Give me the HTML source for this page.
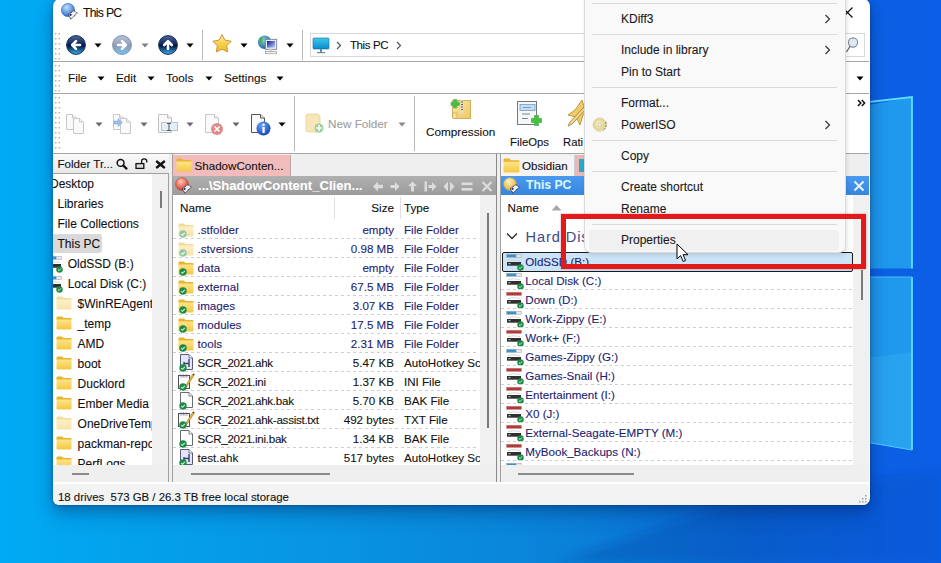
<!DOCTYPE html>
<html><head><meta charset="utf-8"><style>
*{margin:0;padding:0;box-sizing:border-box}
html,body{width:941px;height:563px;overflow:hidden}
body{position:relative;font-family:"Liberation Sans",sans-serif;font-size:12px;color:#000;background:#0a8ee4}
.a{position:absolute}
.t{position:absolute;white-space:nowrap;line-height:1;-webkit-text-stroke:0.1px currentColor}
</style></head><body>
<svg width="0" height="0" style="position:absolute"><defs>
<linearGradient id="fg" x1="0" y1="0" x2="0" y2="1"><stop offset="0" stop-color="#ffe48a"/><stop offset="1" stop-color="#f5c842"/></linearGradient>
<linearGradient id="fgl" x1="0" y1="0" x2="0" y2="1"><stop offset="0" stop-color="#fdf0c8"/><stop offset="1" stop-color="#f8e2a8"/></linearGradient>
<symbol id="folder" viewBox="0 0 16 14"><path d="M0.5 1.5Q0.5 0.5 1.5 0.5H6L7.5 2H14.5Q15.5 2 15.5 3V4H0.5Z" fill="#e9b531"/><path d="M0.5 3.5H15.5V12.5Q15.5 13.5 14.5 13.5H1.5Q0.5 13.5 0.5 12.5Z" fill="url(#fg)"/></symbol>
<symbol id="folderl" viewBox="0 0 16 14"><path d="M0.5 1.5Q0.5 0.5 1.5 0.5H6L7.5 2H14.5Q15.5 2 15.5 3V4H0.5Z" fill="#f3dc9a"/><path d="M0.5 3.5H15.5V12.5Q15.5 13.5 14.5 13.5H1.5Q0.5 13.5 0.5 12.5Z" fill="url(#fgl)"/></symbol>
<symbol id="chk" viewBox="0 0 8 8"><circle cx="4" cy="4" r="3.7" fill="#1f8a48"/><path d="M2.2 4.1L3.5 5.3L5.8 2.8" stroke="#c8f8d0" stroke-width="1.1" fill="none"/></symbol>
<symbol id="chkl" viewBox="0 0 8 8"><circle cx="4" cy="4" r="3.7" fill="#90c8a4"/><path d="M2.2 4.1L3.5 5.3L5.8 2.8" stroke="#fff" stroke-width="1.1" fill="none"/></symbol>
<symbol id="doc" viewBox="0 0 14 17"><path d="M1.5 0.5H9L12.5 4V16.5H1.5Z" fill="#fff" stroke="#7a7a7a"/><path d="M9 0.5V4H12.5" fill="#eee" stroke="#7a7a7a"/></symbol>
<symbol id="drive" viewBox="0 0 16 16"><rect x="0.5" y="1.2" width="15" height="3.3" fill="#e4e8ec" stroke="#9aa0a8" stroke-width=".5"/><rect x="0.8" y="1.5" width="9.5" height="2.7" fill="#3f8fc8"/><path d="M2 7.5Q8 6 14 7.5" stroke="#d8d8d8" stroke-width="1" fill="none"/><rect x="1" y="9" width="14" height="3.7" fill="#303030"/><rect x="2.5" y="10.2" width="2" height="1" fill="#a0f0b0"/></symbol>
<symbol id="driver" viewBox="0 0 16 16"><rect x="0.5" y="1.2" width="15" height="3.3" fill="#b03a3a" stroke="#c89090" stroke-width=".5"/><path d="M2 7.5Q8 6 14 7.5" stroke="#d8d8d8" stroke-width="1" fill="none"/><rect x="1" y="9" width="14" height="3.7" fill="#303030"/><rect x="2.5" y="10.2" width="2" height="1" fill="#a0f0b0"/></symbol>
</defs></svg>
<svg class="a" style="left:0;top:0" width="941" height="563"><defs><linearGradient id="wb" x1="0" y1="0" x2="941" y2="0" gradientUnits="userSpaceOnUse"><stop offset="0" stop-color="#00aaf4"/><stop offset="0.06" stop-color="#02a6f0"/><stop offset="0.35" stop-color="#0894e2"/><stop offset="0.6" stop-color="#0a82d8"/><stop offset="0.8" stop-color="#0a66d8"/><stop offset="0.93" stop-color="#0b60e4"/><stop offset="1" stop-color="#0b5ee6"/></linearGradient><linearGradient id="wt" x1="0" y1="0" x2="0" y2="563" gradientUnits="userSpaceOnUse"><stop offset="0" stop-color="#0a5ad0" stop-opacity=".25"/><stop offset=".4" stop-color="#0a5ad0" stop-opacity="0"/></linearGradient><linearGradient id="wd" x1="560" y1="0" x2="941" y2="0" gradientUnits="userSpaceOnUse"><stop offset="0" stop-color="#002c80" stop-opacity=".22"/><stop offset="1" stop-color="#002c80" stop-opacity=".12"/></linearGradient><linearGradient id="pg1" x1="0" y1="0" x2="1" y2="0"><stop offset="0" stop-color="#1890ea"/><stop offset="1" stop-color="#209aec"/></linearGradient><filter id="bl" x="-20%" y="-50%" width="140%" height="200%"><feGaussianBlur stdDeviation="5"/></filter></defs><rect width="941" height="563" fill="url(#wb)"/><path d="M555 563 L725 505 L870 480 L941 470 L941 563Z" fill="url(#wd)" filter="url(#bl)"/><path d="M760 125 L912 97 L912 268.5 L760 268.5Z" fill="url(#pg1)"/><path d="M760 277 L912 277 L912 450 L760 425Z" fill="url(#pg1)"/><path d="M760 372 L912 352 L912 450 L760 425Z" fill="#50c8ff" fill-opacity=".2"/><path d="M860 103 L912 97 L912 268.5" stroke="#60dcff" stroke-width="1.8" fill="none"/><path d="M912 277 L912 450" stroke="#60dcff" stroke-width="1.8" fill="none"/><path d="M860 277 L912 277" stroke="#4ac0ff" stroke-width="1" fill="none"/><path d="M860 441 L912 450" stroke="#50c8ff" stroke-width="1.2" fill="none"/></svg>
<div class="a" style="left:53px;top:-1px;width:817px;height:506px;background:#fff;border-radius:7px;box-shadow:0 0 3px rgba(0,0,0,.3),0 4px 12px rgba(0,30,90,.3),0 12px 20px rgba(0,30,90,.2)"></div>
<svg class="a" style="left:59.7px;top:2.4000000000000004px;" width="20" height="20" viewBox="0 0 20 20"><defs><radialGradient id="gl" cx=".4" cy=".3" r=".8"><stop offset="0" stop-color="#bfe0ff"/><stop offset="1" stop-color="#1a5cc0"/></radialGradient></defs><circle cx="8" cy="8" r="6.6" fill="url(#gl)" stroke="#1a5cc0" stroke-width=".6"/><polygon points="8.3,12.6 13.9,8.6 17.3,11.1 10.9,17.2" fill="#eeeefa" stroke="#222" stroke-width="1" stroke-dasharray="1.2 .6"/><circle cx="10.6" cy="12.8" r="1.1" fill="#2a2a7a"/></svg>
<div class="t" style="left:83px;top:7.40px;font-size:12.2px;color:#111;letter-spacing:-0.7px">This PC</div>
<svg class="a" style="left:841.5px;top:6.5px;" width="12" height="11" viewBox="0 0 12 11"><path d="M0.5 0.5L10.5 10.5M10.5 0.5L0.5 10.5" stroke="#111" stroke-width="1.2"/></svg>
<svg class="a" style="left:55px;top:33px;" width="6" height="27" viewBox="0 0 6 27"><rect x="0" y="0" width="1.5" height="1.5" fill="#b4b4b4"/><rect x="3.5" y="0" width="1.5" height="1.5" fill="#b4b4b4"/><rect x="0" y="5" width="1.5" height="1.5" fill="#b4b4b4"/><rect x="3.5" y="5" width="1.5" height="1.5" fill="#b4b4b4"/><rect x="0" y="10" width="1.5" height="1.5" fill="#b4b4b4"/><rect x="3.5" y="10" width="1.5" height="1.5" fill="#b4b4b4"/><rect x="0" y="15" width="1.5" height="1.5" fill="#b4b4b4"/><rect x="3.5" y="15" width="1.5" height="1.5" fill="#b4b4b4"/><rect x="0" y="20" width="1.5" height="1.5" fill="#b4b4b4"/><rect x="3.5" y="20" width="1.5" height="1.5" fill="#b4b4b4"/><rect x="0" y="25" width="1.5" height="1.5" fill="#b4b4b4"/><rect x="3.5" y="25" width="1.5" height="1.5" fill="#b4b4b4"/></svg>
<svg class="a" style="left:55px;top:65px;" width="6" height="27" viewBox="0 0 6 27"><rect x="0" y="0" width="1.5" height="1.5" fill="#b4b4b4"/><rect x="3.5" y="0" width="1.5" height="1.5" fill="#b4b4b4"/><rect x="0" y="5" width="1.5" height="1.5" fill="#b4b4b4"/><rect x="3.5" y="5" width="1.5" height="1.5" fill="#b4b4b4"/><rect x="0" y="10" width="1.5" height="1.5" fill="#b4b4b4"/><rect x="3.5" y="10" width="1.5" height="1.5" fill="#b4b4b4"/><rect x="0" y="15" width="1.5" height="1.5" fill="#b4b4b4"/><rect x="3.5" y="15" width="1.5" height="1.5" fill="#b4b4b4"/><rect x="0" y="20" width="1.5" height="1.5" fill="#b4b4b4"/><rect x="3.5" y="20" width="1.5" height="1.5" fill="#b4b4b4"/><rect x="0" y="25" width="1.5" height="1.5" fill="#b4b4b4"/><rect x="3.5" y="25" width="1.5" height="1.5" fill="#b4b4b4"/></svg>
<svg class="a" style="left:55px;top:97px;" width="6" height="54" viewBox="0 0 6 54"><rect x="0" y="0" width="1.5" height="1.5" fill="#b4b4b4"/><rect x="3.5" y="0" width="1.5" height="1.5" fill="#b4b4b4"/><rect x="0" y="5" width="1.5" height="1.5" fill="#b4b4b4"/><rect x="3.5" y="5" width="1.5" height="1.5" fill="#b4b4b4"/><rect x="0" y="10" width="1.5" height="1.5" fill="#b4b4b4"/><rect x="3.5" y="10" width="1.5" height="1.5" fill="#b4b4b4"/><rect x="0" y="15" width="1.5" height="1.5" fill="#b4b4b4"/><rect x="3.5" y="15" width="1.5" height="1.5" fill="#b4b4b4"/><rect x="0" y="20" width="1.5" height="1.5" fill="#b4b4b4"/><rect x="3.5" y="20" width="1.5" height="1.5" fill="#b4b4b4"/><rect x="0" y="25" width="1.5" height="1.5" fill="#b4b4b4"/><rect x="3.5" y="25" width="1.5" height="1.5" fill="#b4b4b4"/><rect x="0" y="30" width="1.5" height="1.5" fill="#b4b4b4"/><rect x="3.5" y="30" width="1.5" height="1.5" fill="#b4b4b4"/><rect x="0" y="35" width="1.5" height="1.5" fill="#b4b4b4"/><rect x="3.5" y="35" width="1.5" height="1.5" fill="#b4b4b4"/><rect x="0" y="40" width="1.5" height="1.5" fill="#b4b4b4"/><rect x="3.5" y="40" width="1.5" height="1.5" fill="#b4b4b4"/><rect x="0" y="45" width="1.5" height="1.5" fill="#b4b4b4"/><rect x="3.5" y="45" width="1.5" height="1.5" fill="#b4b4b4"/><rect x="0" y="50" width="1.5" height="1.5" fill="#b4b4b4"/><rect x="3.5" y="50" width="1.5" height="1.5" fill="#b4b4b4"/></svg>
<svg class="a" style="left:64.5px;top:33.5px;" width="22" height="22" viewBox="0 0 22 22"><defs><linearGradient id="n75" x1="0" y1="0" x2="0" y2="1"><stop offset="0" stop-color="#4a6aa0"/><stop offset=".55" stop-color="#04164a"/><stop offset="1" stop-color="#38b8f0"/></linearGradient></defs><circle cx="11" cy="11" r="9.4" fill="url(#n75)" stroke="#1a2a4a" stroke-width="1"/><path d="M15 11H7.5M11 7.2L7.2 11L11 14.8" stroke="#fff" stroke-width="2.6" stroke-linecap="round" stroke-linejoin="round" fill="none"/></svg>
<svg class="a" style="left:110.5px;top:33.5px;" width="22" height="22" viewBox="0 0 22 22"><defs><linearGradient id="n121" x1="0" y1="0" x2="0" y2="1"><stop offset="0" stop-color="#b8c4d8"/><stop offset=".55" stop-color="#8a9ab8"/><stop offset="1" stop-color="#78c8f0"/></linearGradient></defs><circle cx="11" cy="11" r="9.4" fill="url(#n121)" stroke="#8090a8" stroke-width="1"/><path d="M7 11H14.5M11 7.2L14.8 11L11 14.8" stroke="#fff" stroke-width="2.6" stroke-linecap="round" stroke-linejoin="round" fill="none"/></svg>
<svg class="a" style="left:156.5px;top:33.5px;" width="22" height="22" viewBox="0 0 22 22"><defs><linearGradient id="n167" x1="0" y1="0" x2="0" y2="1"><stop offset="0" stop-color="#4a6aa0"/><stop offset=".55" stop-color="#04164a"/><stop offset="1" stop-color="#38b8f0"/></linearGradient></defs><circle cx="11" cy="11" r="9.4" fill="url(#n167)" stroke="#1a2a4a" stroke-width="1"/><path d="M11 15V7.5M7.2 11L11 7.2L14.8 11" stroke="#fff" stroke-width="2.6" stroke-linecap="round" stroke-linejoin="round" fill="none"/></svg>
<svg class="a" style="left:94.0px;top:43px;" width="8" height="5" viewBox="0 0 8 5"><path d="M0.5 0.5H7.5L4.0 4.5Z" fill="#000"/></svg>
<svg class="a" style="left:140.5px;top:43px;" width="8" height="5" viewBox="0 0 8 5"><path d="M0.5 0.5H7.5L4.0 4.5Z" fill="#808080"/></svg>
<svg class="a" style="left:186.0px;top:43px;" width="8" height="5" viewBox="0 0 8 5"><path d="M0.5 0.5H7.5L4.0 4.5Z" fill="#000"/></svg>
<div class="a" style="left:202px;top:30px;width:1px;height:30px;background:#b8b8b8;"></div>
<svg class="a" style="left:211px;top:33px;" width="22" height="22" viewBox="0 0 22 22"><defs><linearGradient id="st" x1="0" y1="0" x2="0" y2="1"><stop offset="0" stop-color="#fff2b0"/><stop offset=".5" stop-color="#f8d050"/><stop offset="1" stop-color="#f0b828"/></linearGradient></defs><polygon points="11.00,1.60 13.94,7.15 20.13,8.23 15.76,12.75 16.64,18.97 11.00,16.20 5.36,18.97 6.24,12.75 1.87,8.23 8.06,7.15" fill="url(#st)" stroke="#c89838" stroke-width="1" stroke-linejoin="round"/></svg>
<svg class="a" style="left:240.0px;top:43px;" width="8" height="5" viewBox="0 0 8 5"><path d="M0.5 0.5H7.5L4.0 4.5Z" fill="#000"/></svg>
<svg class="a" style="left:256px;top:33px;" width="24" height="24" viewBox="0 0 24 24"><defs><radialGradient id="gb" cx=".4" cy=".35" r=".7"><stop offset="0" stop-color="#8ad0e8"/><stop offset="1" stop-color="#1a5a90"/></radialGradient><linearGradient id="scr" x1="0" y1="0" x2="1" y2="1"><stop offset="0" stop-color="#0a1a9a"/><stop offset="1" stop-color="#c0d0ff"/></linearGradient></defs><circle cx="8.7" cy="9.2" r="6.8" fill="url(#gb)"/><path d="M4 5Q6 4 7 6Q5 9 6 12Q4 11 3 9Z M9 13Q11 11 10 9" fill="#48b060" stroke="#48b060" stroke-width=".6"/><rect x="9.3" y="6.3" width="11.4" height="10" fill="#e8ecf4" stroke="#707888" stroke-width=".8"/><rect x="11" y="8" width="8" height="6.6" fill="url(#scr)"/><rect x="13.5" y="16.3" width="3" height="2.5" fill="#d8d8d8"/><rect x="9.5" y="18.6" width="11" height="2.2" fill="#f0f0f0" stroke="#8a8a8a" stroke-width=".6"/></svg>
<svg class="a" style="left:286.0px;top:43px;" width="8" height="5" viewBox="0 0 8 5"><path d="M0.5 0.5H7.5L4.0 4.5Z" fill="#000"/></svg>
<div class="a" style="left:302px;top:30px;width:1px;height:30px;background:#b8b8b8;"></div>
<div class="a" style="left:310px;top:33px;width:555px;height:24px;background:#fff;border:1px solid #d9d9d9"></div>
<svg class="a" style="left:312px;top:37px;" width="18" height="17" viewBox="0 0 18 17"><defs><linearGradient id="mo" x1="0" y1="0" x2="0" y2="1"><stop offset="0" stop-color="#3ec8f0"/><stop offset="1" stop-color="#0a8ac8"/></linearGradient></defs><rect x="1" y="1" width="16" height="11" rx="1" fill="url(#mo)" stroke="#1a6a9a" stroke-width=".6"/><rect x="8" y="12" width="2" height="3" fill="#6a8a9a"/><rect x="5" y="15" width="8" height="1.2" fill="#6a8a9a"/></svg>
<svg class="a" style="left:336px;top:41px;" width="6" height="9" viewBox="0 0 6 9"><path d="M1 1L4.5 4.5L1 8" stroke="#555" stroke-width="1.2" fill="none"/></svg>
<div class="t" style="left:350px;top:39.75px;font-size:11.5px;color:#111;letter-spacing:-0.4px">This PC</div>
<svg class="a" style="left:396px;top:41px;" width="6" height="9" viewBox="0 0 6 9"><path d="M1 1L4.5 4.5L1 8" stroke="#555" stroke-width="1.2" fill="none"/></svg>
<svg class="a" style="left:845px;top:36px;" width="18" height="18" viewBox="0 0 18 18"><circle cx="8" cy="6.5" r="4.6" fill="#dceaf8" stroke="#868a90" stroke-width="1.1"/><path d="M5.2 10L1.5 16" stroke="#6a6a6a" stroke-width="1.3"/></svg>
<div class="a" style="left:53px;top:61px;width:816px;height:1px;background:#a6a6a6;"></div>
<div class="a" style="left:53px;top:93px;width:816px;height:1px;background:#a6a6a6;"></div>
<div class="a" style="left:53px;top:153px;width:816px;height:1px;background:#a6a6a6;"></div>
<div class="t" style="left:68px;top:72.15px;font-size:11.7px;color:#111;">File</div>
<svg class="a" style="left:97.0px;top:76px;" width="8" height="5" viewBox="0 0 8 5"><path d="M0.5 0.5H7.5L4.0 4.5Z" fill="#000"/></svg>
<div class="t" style="left:116px;top:72.15px;font-size:11.7px;color:#111;">Edit</div>
<svg class="a" style="left:147.0px;top:76px;" width="8" height="5" viewBox="0 0 8 5"><path d="M0.5 0.5H7.5L4.0 4.5Z" fill="#000"/></svg>
<div class="t" style="left:166px;top:72.15px;font-size:11.7px;color:#111;">Tools</div>
<svg class="a" style="left:205.0px;top:76px;" width="8" height="5" viewBox="0 0 8 5"><path d="M0.5 0.5H7.5L4.0 4.5Z" fill="#000"/></svg>
<div class="t" style="left:224px;top:72.15px;font-size:11.7px;color:#111;">Settings</div>
<svg class="a" style="left:276.0px;top:76px;" width="8" height="5" viewBox="0 0 8 5"><path d="M0.5 0.5H7.5L4.0 4.5Z" fill="#000"/></svg>
<svg class="a" style="left:855.5px;top:76px;" width="8" height="5" viewBox="0 0 8 5"><path d="M0.5 0.5H7.5L4.0 4.5Z" fill="#000"/></svg>
<svg class="a" style="left:66px;top:113.5px;" width="12" height="17" viewBox="0 0 12 17"><path d="M0.5 0.5H6.5L10.5 4V15.5H0.5Z" fill="#fafafa" stroke="#c8c8c8"/><path d="M6.5 0.5V4H10.5" fill="#eee" stroke="#c8c8c8"/></svg>
<svg class="a" style="left:73px;top:117.5px;" width="12" height="17" viewBox="0 0 12 17"><path d="M0.5 0.5H6.5L10.5 4V15.5H0.5Z" fill="#fafafa" stroke="#c8c8c8"/><path d="M6.5 0.5V4H10.5" fill="#eee" stroke="#c8c8c8"/></svg>
<svg class="a" style="left:94.5px;top:122px;" width="8" height="5" viewBox="0 0 8 5"><path d="M0.5 0.5H7.5L4.0 4.5Z" fill="#6a6a6a"/></svg>
<svg class="a" style="left:113px;top:113.5px;" width="12" height="17" viewBox="0 0 12 17"><path d="M0.5 0.5H6.5L10.5 4V15.5H0.5Z" fill="#fafafa" stroke="#c8c8c8"/><path d="M6.5 0.5V4H10.5" fill="#eee" stroke="#c8c8c8"/></svg>
<svg class="a" style="left:119.5px;top:117.5px;" width="12" height="17" viewBox="0 0 12 17"><path d="M0.5 0.5H6.5L10.5 4V15.5H0.5Z" fill="#fafafa" stroke="#c8c8c8"/><path d="M6.5 0.5V4H10.5" fill="#eee" stroke="#c8c8c8"/></svg>
<svg class="a" style="left:113px;top:118px;" width="10" height="9" viewBox="0 0 10 9"><path d="M1 3H5V0.5L9.5 4.5L5 8.5V6H1Z" fill="#9cc0e8" stroke="#7aa0d0" stroke-width=".5"/></svg>
<svg class="a" style="left:140.0px;top:122px;" width="8" height="5" viewBox="0 0 8 5"><path d="M0.5 0.5H7.5L4.0 4.5Z" fill="#6a6a6a"/></svg>
<svg class="a" style="left:158px;top:113.5px;" width="15" height="20" viewBox="0 0 15 20"><path d="M0.5 0.5H9.5L13.5 4V18.5H0.5Z" fill="#fafafa" stroke="#c0c0c0"/><path d="M9.5 0.5V4H13.5" fill="#eee" stroke="#c0c0c0"/></svg>
<div class="a" style="left:161px;top:121.5px;width:17px;height:9px;background:#e4eef8;border:1px solid #b4c4d4"></div>
<svg class="a" style="left:164px;top:122.5px;" width="10" height="8" viewBox="0 0 10 8"><path d="M3 0.5H7M5 0.5V7.5M3 7.5H7" stroke="#555" stroke-width="1"/></svg>
<svg class="a" style="left:186.0px;top:122px;" width="8" height="5" viewBox="0 0 8 5"><path d="M0.5 0.5H7.5L4.0 4.5Z" fill="#6a6a6a"/></svg>
<svg class="a" style="left:205px;top:113.5px;" width="15" height="20" viewBox="0 0 15 20"><path d="M0.5 0.5H9.5L13.5 4V18.5H0.5Z" fill="#fafafa" stroke="#c8c8c8"/><path d="M9.5 0.5V4H13.5" fill="#eee" stroke="#c8c8c8"/></svg>
<svg class="a" style="left:210px;top:122px;" width="14" height="14" viewBox="0 0 14 14"><circle cx="7" cy="7" r="6" fill="#e08a8a"/><path d="M4.5 4.5L9.5 9.5M9.5 4.5L4.5 9.5" stroke="#fff" stroke-width="1.6"/></svg>
<svg class="a" style="left:232.0px;top:122px;" width="8" height="5" viewBox="0 0 8 5"><path d="M0.5 0.5H7.5L4.0 4.5Z" fill="#6a6a6a"/></svg>
<svg class="a" style="left:251px;top:113.5px;" width="15" height="20" viewBox="0 0 15 20"><path d="M0.5 0.5H9.5L13.5 4V18.5H0.5Z" fill="#fafafa" stroke="#555"/><path d="M9.5 0.5V4H13.5" fill="#eee" stroke="#555"/></svg>
<svg class="a" style="left:256px;top:121px;" width="15" height="15" viewBox="0 0 15 15"><defs><radialGradient id="ig" cx=".4" cy=".3" r=".8"><stop offset="0" stop-color="#6aa8ff"/><stop offset="1" stop-color="#0a3aa8"/></radialGradient></defs><circle cx="7.5" cy="7.5" r="7" fill="url(#ig)"/><rect x="6.5" y="6" width="2.2" height="6" fill="#fff"/><circle cx="7.6" cy="3.8" r="1.2" fill="#fff"/></svg>
<svg class="a" style="left:278.0px;top:122px;" width="8" height="5" viewBox="0 0 8 5"><path d="M0.5 0.5H7.5L4.0 4.5Z" fill="#000"/></svg>
<div class="a" style="left:294px;top:96px;width:1px;height:55px;background:#b8b8b8;"></div>
<svg class="a" style="left:304px;top:113px;" width="20" height="21" viewBox="0 0 20 21"><path d="M2 3Q2 1 4 1H14L16 3V17Q16 19 14 19H4Q2 19 2 17Z" fill="#f6e6b8" stroke="#e8d090" stroke-width=".8"/><circle cx="15" cy="15" r="4.5" fill="#9ad09a"/><path d="M15 12V18M12 15H18" stroke="#fff" stroke-width="1.6"/></svg>
<div class="t" style="left:328px;top:118.15px;font-size:11.7px;color:#a0a0a0;">New Folder</div>
<svg class="a" style="left:398.0px;top:122px;" width="8" height="5" viewBox="0 0 8 5"><path d="M0.5 0.5H7.5L4.0 4.5Z" fill="#8a8a8a"/></svg>
<div class="a" style="left:414px;top:96px;width:1px;height:55px;background:#b8b8b8;"></div>
<svg class="a" style="left:440px;top:95px;" width="40" height="30" viewBox="0 0 40 30"><defs><linearGradient id="cb" x1="0" y1="0" x2="1" y2="1"><stop offset="0" stop-color="#fbe9a8"/><stop offset="1" stop-color="#eec660"/></linearGradient></defs><path d="M12.5 5.5H30.5V23.5H14Q12.5 23.5 12.5 22Z" fill="url(#cb)" stroke="#c8a048" stroke-width=".8"/><path d="M12.5 18V22Q12.5 23.5 14 23.5H17V18Z" fill="#f4e0a0" stroke="#c8a048" stroke-width=".6"/><rect x="20.5" y="5.5" width="3" height="13" fill="#e6ddc0"/><path d="M21 7H23M21 9.5H23M21 12H23M21 14.5H23" stroke="#555" stroke-width=".9"/><path d="M13.6 4.800000000000001H16.8V7.200000000000001H19.2V10.4H16.8V12.8H13.6V10.4H11.2V7.200000000000001H13.6Z" fill="#44c040" stroke="#1a8a1a" stroke-width=".8"/><path d="M13.6 4.800000000000001H16.8V7.200000000000001H19.2V10.4H16.8V12.8H13.6V10.4H11.2V7.200000000000001H13.6Z" fill="none" stroke="#a8f0a0" stroke-width=".4" transform="translate(0 0)"/></svg>
<div class="t" style="left:426px;top:125.62px;font-size:11.75px;color:#111;">Compression</div>
<svg class="a" style="left:510px;top:95px;" width="35" height="35" viewBox="0 0 35 35"><rect x="7.5" y="6.5" width="19" height="23" fill="#f4f6f8" stroke="#707880"/><rect x="10" y="9.5" width="15" height="6" fill="#c4dcf4" stroke="#6a90b8" stroke-width=".7"/><path d="M13 12.5H21" stroke="#6a90b8" stroke-width=".8"/><path d="M12 19H20M12 23.5H18" stroke="#707880" stroke-width=".9"/><path d="M24.5 20.5H28.5V23.5H31.5V27.5H28.5V30.5H24.5V27.5H21.5V23.5H24.5Z" fill="#44c040" stroke="#1a8a1a" stroke-width=".8"/><path d="M24.5 20.5H28.5V23.5H31.5V27.5H28.5V30.5H24.5V27.5H21.5V23.5H24.5Z" fill="none" stroke="#a8f0a0" stroke-width=".4" transform="translate(0 0)"/></svg>
<div class="t" style="left:510px;top:137.35px;font-size:11.3px;color:#111;">FileOps</div>
<svg class="a" style="left:562px;top:95px;" width="24" height="35" viewBox="0 0 24 35"><path d="M20 5L22.5 13L28 15L21 20L18 30L14 22L6 20L13 15Z" fill="#f0cc68" stroke="#b08828" stroke-width=".8"/><path d="M24 10L8 27L6 31L10 29L26 12Z" fill="#f4d890" stroke="#906818" stroke-width=".7"/></svg>
<div class="t" style="left:563px;top:137.35px;font-size:11.3px;color:#111;">Rati</div>
<svg class="a" style="left:856.5px;top:98.5px;" width="9" height="8" viewBox="0 0 9 8"><path d="M1 1L3.8 4L1 7M4.8 1L7.6 4L4.8 7" stroke="#111" stroke-width="1.5" fill="none"/></svg>
<div class="a" style="left:53px;top:154px;width:816px;height:328px;background:#efefef;"></div>
<div class="a" style="left:53px;top:154px;width:116px;height:19px;background:linear-gradient(#fafafa,#e8e8e8)"></div>
<div class="t" style="left:57.5px;top:157.70px;font-size:11.6px;color:#111;">Folder Tr...</div>
<svg class="a" style="left:115px;top:157px;" width="13" height="13" viewBox="0 0 13 13"><circle cx="5.6" cy="5.9" r="3.4" fill="#f4f4f4" stroke="#111" stroke-width="1.5"/><path d="M8.2 8.4L11.5 11.6" stroke="#111" stroke-width="2.2" stroke-linecap="round"/></svg>
<svg class="a" style="left:134px;top:157px;" width="14" height="13" viewBox="0 0 14 13"><rect x="2" y="6.6" width="7.8" height="4.8" fill="#dcdcdc" stroke="#111" stroke-width="1.3"/><path d="M7.6 6.6V4.6Q7.6 1.8 10.2 1.8Q12.8 1.8 12.8 4.6V5.6" fill="none" stroke="#111" stroke-width="1.3"/></svg>
<svg class="a" style="left:154.5px;top:159.5px;" width="11" height="9" viewBox="0 0 11 9"><path d="M1.2 1L9.8 8M9.8 1L1.2 8" stroke="#111" stroke-width="2.3"/></svg>
<div class="a" style="left:53px;top:173px;width:116px;height:1px;background:#a0a0a0;"></div>
<div class="a" style="left:53px;top:174px;width:99px;height:291px;background:#fff;"></div>
<div class="a" style="left:152px;top:174px;width:16px;height:291px;background:#f0f0f0;"></div>
<div class="a" style="left:159.5px;top:191px;width:2px;height:17px;background:#7a7a7a;"></div>
<div class="a" style="left:168px;top:173px;width:1px;height:309px;background:#a0a0a0;"></div>
<div class="a" style="left:172px;top:154px;width:1px;height:328px;background:#a0a0a0;"></div>
<div class="a" style="left:72px;top:473px;width:17px;height:2px;background:#8a8a8a;"></div>
<div class="a" style="left:53px;top:174px;width:99px;height:291px;overflow:hidden">
<div class="t" style="left:-3px;top:3.70px;font-size:12px;color:#111">Desktop</div>
<div class="t" style="left:4.5px;top:23.70px;font-size:12px;color:#111">Libraries</div>
<div class="t" style="left:4.5px;top:43.70px;font-size:12px;color:#111">File Collections</div>
<div class="a" style="left:0;top:59.5px;width:48.6px;height:19px;background:#d9d9d9;border-radius:0 3px 3px 0"></div>
<div class="t" style="left:4.5px;top:63.70px;font-size:12px;color:#111">This PC</div>
<svg class="a" style="left:-7px;top:81px" width="16" height="16"><use href="#drive"/></svg>
<svg class="a" style="left:2.7px;top:91.5px" width="7" height="7"><use href="#chk"/></svg>
<div class="t" style="left:14.7px;top:83.70px;font-size:12px;color:#111">OldSSD (B:)</div>
<svg class="a" style="left:-7px;top:101px" width="16" height="16"><use href="#drive"/></svg>
<svg class="a" style="left:2.7px;top:111.5px" width="7" height="7"><use href="#chk"/></svg>
<div class="t" style="left:14.7px;top:103.70px;font-size:12px;color:#111">Local Disk (C:)</div>
<svg class="a" style="left:3px;top:122px" width="16" height="14"><use href="#folderl"/></svg>
<div class="t" style="left:24.6px;top:123.70px;font-size:12px;color:#111">$WinREAgent</div>
<svg class="a" style="left:3px;top:142px" width="16" height="14"><use href="#folder"/></svg>
<div class="t" style="left:24.6px;top:143.70px;font-size:12px;color:#111">_temp</div>
<svg class="a" style="left:3px;top:162px" width="16" height="14"><use href="#folder"/></svg>
<div class="t" style="left:24.6px;top:163.70px;font-size:12px;color:#111">AMD</div>
<svg class="a" style="left:3px;top:182px" width="16" height="14"><use href="#folder"/></svg>
<div class="t" style="left:24.6px;top:183.70px;font-size:12px;color:#111">boot</div>
<svg class="a" style="left:3px;top:202px" width="16" height="14"><use href="#folder"/></svg>
<div class="t" style="left:24.6px;top:203.70px;font-size:12px;color:#111">Ducklord</div>
<svg class="a" style="left:3px;top:222px" width="16" height="14"><use href="#folder"/></svg>
<div class="t" style="left:24.6px;top:223.70px;font-size:12px;color:#111">Ember Media</div>
<svg class="a" style="left:3px;top:242px" width="16" height="14"><use href="#folderl"/></svg>
<div class="t" style="left:24.6px;top:243.70px;font-size:12px;color:#111">OneDriveTemp</div>
<svg class="a" style="left:3px;top:262px" width="16" height="14"><use href="#folder"/></svg>
<div class="t" style="left:24.6px;top:263.70px;font-size:12px;color:#111">packman-repo</div>
<svg class="a" style="left:3px;top:282px" width="16" height="14"><use href="#folder"/></svg>
<div class="t" style="left:24.6px;top:283.70px;font-size:12px;color:#111">PerfLogs</div>
</div>
<div class="a" style="left:173px;top:155px;width:118px;height:21px;background:#f2bcbc;border-right:1px solid #b8a8a8"></div>
<svg class="a" style="left:176px;top:157.5px" width="16" height="14"><use href="#folder"/></svg>
<div class="t" style="left:194.5px;top:159.70px;font-size:11.6px;color:#111;">ShadowConten...</div>
<div class="a" style="left:173px;top:176px;width:323px;height:19px;background:linear-gradient(#b0b0b0,#9c9c9c);"></div>
<svg class="a" style="left:173.6px;top:176.2px;" width="20" height="20" viewBox="0 0 20 20"><defs><radialGradient id="rg" cx=".4" cy=".3" r=".8"><stop offset="0" stop-color="#ffc8b8"/><stop offset="1" stop-color="#d02818"/></radialGradient></defs><circle cx="8" cy="8" r="6.3" fill="url(#rg)" stroke="#d02818" stroke-width=".6"/><polygon points="8.3,12.6 13.9,8.6 17.3,11.1 10.9,17.2" fill="#eeeefa" stroke="#222" stroke-width="1" stroke-dasharray="1.2 .6"/><circle cx="10.6" cy="12.8" r="1.1" fill="#2a2a7a"/></svg>
<div class="t" style="left:198px;top:179.45px;font-size:13.1px;color:#fff;font-weight:bold;">...\ShadowContent_Clien...</div>
<svg class="a" style="left:371px;top:179.5px;" width="130" height="13" viewBox="0 0 130 13"><g transform="translate(0.5 .5)"><path d="M1.5 6L6.5 1V4.2H11.5V7.8H6.5V11Z" fill="#dcdcdc"/>
<path d="M28 6L23.5 1.5V4.5H19V7.5H23.5V10.5Z" fill="#dcdcdc"/>
<path d="M41 1L45.5 5.5H42.5V11H39.5V5.5H36.5Z" fill="#dcdcdc"/>
<rect x="53" y="1" width="2.5" height="10" fill="#dcdcdc"/><path d="M65 6L60.5 1.5V4.5H57V7.5H60.5V10.5Z" fill="#dcdcdc"/>
<path d="M72 6L76.5 1V11Z M83 6L78.5 1V11Z" fill="#dcdcdc"/>
<rect x="90" y="2" width="11" height="2.6" fill="#dcdcdc"/><rect x="90" y="7.5" width="11" height="2.6" fill="#dcdcdc"/>
<path d="M111 1.5L120 10.5M120 1.5L111 10.5" stroke="#dcdcdc" stroke-width="2.2"/></g></svg>
<div class="a" style="left:173px;top:195px;width:307px;height:270px;background:#fff;"></div>
<div class="a" style="left:480px;top:195px;width:16px;height:270px;background:#f0f0f0;"></div>
<div class="a" style="left:487px;top:213px;width:2px;height:215px;background:#7a7a7a;"></div>
<div class="a" style="left:334px;top:197px;width:1px;height:22px;background:#e0e0e0;"></div>
<div class="a" style="left:399.5px;top:197px;width:1px;height:22px;background:#e0e0e0;"></div>
<div class="t" style="left:180px;top:201.65px;font-size:11.7px;color:#111;">Name</div>
<div class="t" style="right:547px;top:201.65px;font-size:11.7px;color:#111;">Size</div>
<div class="t" style="left:404px;top:201.65px;font-size:11.7px;color:#111;">Type</div>
<div class="a" style="left:173px;top:219px;width:307px;height:246px;overflow:hidden">
<svg class="a" style="left:5px;top:4px" width="16" height="14"><use href="#folderl"/></svg>
<svg class="a" style="left:6px;top:11px" width="8" height="8"><use href="#chkl"/></svg>
<div class="t" style="left:24.6px;top:5.20px;font-size:11.6px;color:#1c1c70;">.stfolder</div>
<div class="t" style="right:86px;top:5.20px;font-size:11.6px;color:#1c1c70">empty</div>
<div class="t" style="left:231px;top:5.20px;font-size:11.6px;color:#1c1c70">File Folder</div>
<div class="a" style="left:0;top:19px;width:303px;height:1px;background:repeating-linear-gradient(90deg,#cfcfcf 0 3px,transparent 3px 6px)"></div>
<svg class="a" style="left:5px;top:23px" width="16" height="14"><use href="#folderl"/></svg>
<svg class="a" style="left:6px;top:30px" width="8" height="8"><use href="#chkl"/></svg>
<div class="t" style="left:24.6px;top:24.20px;font-size:11.6px;color:#1c1c70;">.stversions</div>
<div class="t" style="right:86px;top:24.20px;font-size:11.6px;color:#1c1c70">0.98 MB</div>
<div class="t" style="left:231px;top:24.20px;font-size:11.6px;color:#1c1c70">File Folder</div>
<div class="a" style="left:0;top:38px;width:303px;height:1px;background:repeating-linear-gradient(90deg,#cfcfcf 0 3px,transparent 3px 6px)"></div>
<svg class="a" style="left:5px;top:42px" width="16" height="14"><use href="#folder"/></svg>
<svg class="a" style="left:6px;top:49px" width="8" height="8"><use href="#chk"/></svg>
<div class="t" style="left:24.6px;top:43.20px;font-size:11.6px;color:#1c1c70;">data</div>
<div class="t" style="right:86px;top:43.20px;font-size:11.6px;color:#1c1c70">empty</div>
<div class="t" style="left:231px;top:43.20px;font-size:11.6px;color:#1c1c70">File Folder</div>
<div class="a" style="left:0;top:57px;width:303px;height:1px;background:repeating-linear-gradient(90deg,#cfcfcf 0 3px,transparent 3px 6px)"></div>
<svg class="a" style="left:5px;top:61px" width="16" height="14"><use href="#folder"/></svg>
<svg class="a" style="left:6px;top:68px" width="8" height="8"><use href="#chk"/></svg>
<div class="t" style="left:24.6px;top:62.20px;font-size:11.6px;color:#1c1c70;">external</div>
<div class="t" style="right:86px;top:62.20px;font-size:11.6px;color:#1c1c70">67.5 MB</div>
<div class="t" style="left:231px;top:62.20px;font-size:11.6px;color:#1c1c70">File Folder</div>
<div class="a" style="left:0;top:76px;width:303px;height:1px;background:repeating-linear-gradient(90deg,#cfcfcf 0 3px,transparent 3px 6px)"></div>
<svg class="a" style="left:5px;top:80px" width="16" height="14"><use href="#folder"/></svg>
<svg class="a" style="left:6px;top:87px" width="8" height="8"><use href="#chk"/></svg>
<div class="t" style="left:24.6px;top:81.20px;font-size:11.6px;color:#1c1c70;">images</div>
<div class="t" style="right:86px;top:81.20px;font-size:11.6px;color:#1c1c70">3.07 KB</div>
<div class="t" style="left:231px;top:81.20px;font-size:11.6px;color:#1c1c70">File Folder</div>
<div class="a" style="left:0;top:95px;width:303px;height:1px;background:repeating-linear-gradient(90deg,#cfcfcf 0 3px,transparent 3px 6px)"></div>
<svg class="a" style="left:5px;top:99px" width="16" height="14"><use href="#folder"/></svg>
<svg class="a" style="left:6px;top:106px" width="8" height="8"><use href="#chk"/></svg>
<div class="t" style="left:24.6px;top:100.20px;font-size:11.6px;color:#1c1c70;">modules</div>
<div class="t" style="right:86px;top:100.20px;font-size:11.6px;color:#1c1c70">17.5 MB</div>
<div class="t" style="left:231px;top:100.20px;font-size:11.6px;color:#1c1c70">File Folder</div>
<div class="a" style="left:0;top:114px;width:303px;height:1px;background:repeating-linear-gradient(90deg,#cfcfcf 0 3px,transparent 3px 6px)"></div>
<svg class="a" style="left:5px;top:118px" width="16" height="14"><use href="#folder"/></svg>
<svg class="a" style="left:6px;top:125px" width="8" height="8"><use href="#chk"/></svg>
<div class="t" style="left:24.6px;top:119.20px;font-size:11.6px;color:#1c1c70;">tools</div>
<div class="t" style="right:86px;top:119.20px;font-size:11.6px;color:#1c1c70">2.31 MB</div>
<div class="t" style="left:231px;top:119.20px;font-size:11.6px;color:#1c1c70">File Folder</div>
<div class="a" style="left:0;top:133px;width:303px;height:1px;background:repeating-linear-gradient(90deg,#cfcfcf 0 3px,transparent 3px 6px)"></div>
<svg class="a" style="left:6px;top:135px" width="16" height="18"><path d="M1.5 0.5H10L13.5 4V15.5H1.5Z" fill="#e2e6f8" stroke="#5a5a78"/><path d="M10 0.5V4H13.5" fill="#f4f4fc" stroke="#5a5a78" stroke-width=".8"/><path d="M10 5V13M5 8V11M5 9.5H10" stroke="#3c3c6a" stroke-width="1.4"/></svg>
<svg class="a" style="left:6px;top:144.5px" width="8" height="8"><use href="#chk"/></svg>
<div class="t" style="left:24.6px;top:138.20px;font-size:11.6px;color:#111;letter-spacing:-0.28px;">SCR_2021.ahk</div>
<div class="t" style="right:86px;top:138.20px;font-size:11.6px;color:#111">5.47 KB</div>
<div class="t" style="left:231px;top:138.20px;font-size:11.6px;color:#111">AutoHotkey Script</div>
<div class="a" style="left:0;top:152px;width:303px;height:1px;background:repeating-linear-gradient(90deg,#cfcfcf 0 3px,transparent 3px 6px)"></div>
<svg class="a" style="left:4px;top:154px" width="18" height="18"><rect x="1.5" y="2.5" width="11" height="13" fill="#fff" stroke="#505058"/><path d="M3 4H11" stroke="#b8b8c8" stroke-width="1"/><path d="M4 1.5V3.5M6.5 1.5V3.5M9 1.5V3.5" stroke="#606068" stroke-width=".9"/><path d="M15.5 1.5L8.5 13L8 15L9.7 13.8L17 2.5Z" fill="#f0c040" stroke="#8a6a10" stroke-width=".6"/><path d="M15.5 1.5L17 2.5L17.6 1.2L16.6 .4Z" fill="#602020"/></svg>
<svg class="a" style="left:6px;top:163.5px" width="8" height="8"><use href="#chk"/></svg>
<div class="t" style="left:24.6px;top:157.20px;font-size:11.6px;color:#111;letter-spacing:-0.28px;">SCR_2021.ini</div>
<div class="t" style="right:86px;top:157.20px;font-size:11.6px;color:#111">1.37 KB</div>
<div class="t" style="left:231px;top:157.20px;font-size:11.6px;color:#111">INI File</div>
<div class="a" style="left:0;top:171px;width:303px;height:1px;background:repeating-linear-gradient(90deg,#cfcfcf 0 3px,transparent 3px 6px)"></div>
<svg class="a" style="left:6px;top:173px" width="16" height="18"><path d="M1.5 0.5H10L13.5 4V15.5H1.5Z" fill="#fff" stroke="#6a6a72"/><path d="M10 0.5V4H13.5" fill="#f0f0f0" stroke="#6a6a72" stroke-width=".8"/></svg>
<svg class="a" style="left:6px;top:182.5px" width="8" height="8"><use href="#chk"/></svg>
<div class="t" style="left:24.6px;top:176.20px;font-size:11.6px;color:#111;letter-spacing:-0.28px;">SCR_2021.ahk.bak</div>
<div class="t" style="right:86px;top:176.20px;font-size:11.6px;color:#111">5.70 KB</div>
<div class="t" style="left:231px;top:176.20px;font-size:11.6px;color:#111">BAK File</div>
<div class="a" style="left:0;top:190px;width:303px;height:1px;background:repeating-linear-gradient(90deg,#cfcfcf 0 3px,transparent 3px 6px)"></div>
<svg class="a" style="left:4px;top:192px" width="18" height="18"><rect x="1.5" y="2.5" width="11" height="13" fill="#fff" stroke="#505058"/><path d="M3 4H11" stroke="#b8b8c8" stroke-width="1"/><path d="M4 1.5V3.5M6.5 1.5V3.5M9 1.5V3.5" stroke="#606068" stroke-width=".9"/><path d="M15.5 1.5L8.5 13L8 15L9.7 13.8L17 2.5Z" fill="#f0c040" stroke="#8a6a10" stroke-width=".6"/><path d="M15.5 1.5L17 2.5L17.6 1.2L16.6 .4Z" fill="#602020"/></svg>
<svg class="a" style="left:6px;top:201.5px" width="8" height="8"><use href="#chk"/></svg>
<div class="t" style="left:24.6px;top:195.20px;font-size:11.6px;color:#111;letter-spacing:-0.28px;">SCR_2021.ahk-assist.txt</div>
<div class="t" style="right:86px;top:195.20px;font-size:11.6px;color:#111">492 bytes</div>
<div class="t" style="left:231px;top:195.20px;font-size:11.6px;color:#111">TXT File</div>
<div class="a" style="left:0;top:209px;width:303px;height:1px;background:repeating-linear-gradient(90deg,#cfcfcf 0 3px,transparent 3px 6px)"></div>
<svg class="a" style="left:6px;top:211px" width="16" height="18"><path d="M1.5 0.5H10L13.5 4V15.5H1.5Z" fill="#fff" stroke="#6a6a72"/><path d="M10 0.5V4H13.5" fill="#f0f0f0" stroke="#6a6a72" stroke-width=".8"/></svg>
<svg class="a" style="left:6px;top:220.5px" width="8" height="8"><use href="#chk"/></svg>
<div class="t" style="left:24.6px;top:214.20px;font-size:11.6px;color:#111;letter-spacing:-0.28px;">SCR_2021.ini.bak</div>
<div class="t" style="right:86px;top:214.20px;font-size:11.6px;color:#111">1.34 KB</div>
<div class="t" style="left:231px;top:214.20px;font-size:11.6px;color:#111">BAK File</div>
<div class="a" style="left:0;top:228px;width:303px;height:1px;background:repeating-linear-gradient(90deg,#cfcfcf 0 3px,transparent 3px 6px)"></div>
<svg class="a" style="left:6px;top:230px" width="16" height="18"><path d="M1.5 0.5H10L13.5 4V15.5H1.5Z" fill="#e2e6f8" stroke="#5a5a78"/><path d="M10 0.5V4H13.5" fill="#f4f4fc" stroke="#5a5a78" stroke-width=".8"/><path d="M10 5V13M5 8V11M5 9.5H10" stroke="#3c3c6a" stroke-width="1.4"/></svg>
<svg class="a" style="left:6px;top:239.5px" width="8" height="8"><use href="#chk"/></svg>
<div class="t" style="left:24.6px;top:233.20px;font-size:11.6px;color:#111;">test.ahk</div>
<div class="t" style="right:86px;top:233.20px;font-size:11.6px;color:#111">517 bytes</div>
<div class="t" style="left:231px;top:233.20px;font-size:11.6px;color:#111">AutoHotkey Script</div>
</div>
<div class="a" style="left:191px;top:473px;width:139px;height:2px;background:#8a8a8a;"></div>
<div class="a" style="left:496px;top:154px;width:1px;height:328px;background:#8a8a8a;"></div>
<div class="a" style="left:500px;top:154px;width:1px;height:328px;background:#a0a0a0;"></div>
<div class="a" style="left:501px;top:155px;width:74px;height:21px;background:#f4f4f4;border-right:1px solid #d0d0d0"></div>
<svg class="a" style="left:503px;top:158px" width="17" height="15"><use href="#folder"/></svg>
<div class="t" style="left:522px;top:160.20px;font-size:11.6px;color:#111;">Obsidian</div>
<div class="a" style="left:575px;top:155px;width:10px;height:21px;background:#e8b8b8;"></div>
<div class="a" style="left:579px;top:159px;width:5px;height:13px;background:#2aa8c8;"></div>
<div class="a" style="left:501px;top:176px;width:368px;height:19px;background:linear-gradient(#4a9af0,#3686e0);"></div>
<svg class="a" style="left:501.6px;top:176.2px;" width="20" height="20" viewBox="0 0 20 20"><defs><radialGradient id="yg" cx=".4" cy=".3" r=".8"><stop offset="0" stop-color="#fff4c0"/><stop offset="1" stop-color="#d8a830"/></radialGradient></defs><circle cx="8" cy="8" r="6.3" fill="url(#yg)" stroke="#d8a830" stroke-width=".6"/><polygon points="8.3,12.6 13.9,8.6 17.3,11.1 10.9,17.2" fill="#eeeefa" stroke="#222" stroke-width="1" stroke-dasharray="1.2 .6"/><circle cx="10.6" cy="12.8" r="1.1" fill="#2a2a7a"/></svg>
<div class="t" style="left:526px;top:179.40px;font-size:12.2px;color:#d8f4ff;font-weight:bold;">This PC</div>
<svg class="a" style="left:853px;top:180px;" width="12" height="12" viewBox="0 0 12 12"><path d="M1.5 1.5L10.5 10.5M10.5 1.5L1.5 10.5" stroke="#e8f4ff" stroke-width="2"/></svg>
<div class="a" style="left:501px;top:195px;width:352px;height:270px;background:#fff;"></div>
<div class="a" style="left:853px;top:195px;width:16px;height:270px;background:#f0f0f0;"></div>
<div class="a" style="left:861px;top:270px;width:2px;height:30px;background:#7a7a7a;"></div>
<div class="t" style="left:507.5px;top:201.65px;font-size:11.7px;color:#111;">Name</div>
<svg class="a" style="left:551px;top:204px;" width="11" height="7" viewBox="0 0 11 7"><path d="M0.5 6.5L5.5 1L10.5 6.5Z" fill="#a8a8a8"/></svg>
<svg class="a" style="left:506px;top:232px;" width="12" height="8" viewBox="0 0 12 8"><path d="M1 1.5L6 6.5L11 1.5" stroke="#333" stroke-width="1.5" fill="none"/></svg>
<div class="t" style="left:525.5px;top:229.70px;font-size:14.6px;color:#3d4a8a;letter-spacing:0.9px;-webkit-text-stroke:0">Hard Disk Drives</div>
<div class="a" style="left:502px;top:252px;width:351px;height:20px;background:#cce4f7;border:1px solid #1a1a1a;border-radius:2px"></div>
<div class="a" style="left:501px;top:195px;width:352px;height:270px;overflow:hidden">
<svg class="a" style="left:5px;top:58px" width="16" height="16"><use href="#drive"/></svg>
<svg class="a" style="left:15.5px;top:69px" width="7" height="7"><use href="#chk"/></svg>
<div class="t" style="left:24.3px;top:61.00px;font-size:11.6px;color:#1c1c70">OldSSD (B:)</div>
<svg class="a" style="left:5px;top:77px" width="16" height="16"><use href="#drive"/></svg>
<svg class="a" style="left:15.5px;top:88px" width="7" height="7"><use href="#chk"/></svg>
<div class="t" style="left:24.3px;top:80.00px;font-size:11.6px;color:#1c1c70">Local Disk (C:)</div>
<div class="a" style="left:0;top:94px;width:352px;height:1px;background:repeating-linear-gradient(90deg,#cfcfcf 0 3px,transparent 3px 6px)"></div>
<svg class="a" style="left:5px;top:96px" width="16" height="16"><use href="#driver"/></svg>
<svg class="a" style="left:15.5px;top:107px" width="7" height="7"><use href="#chk"/></svg>
<div class="t" style="left:24.3px;top:99.00px;font-size:11.6px;color:#1c1c70">Down (D:)</div>
<div class="a" style="left:0;top:113px;width:352px;height:1px;background:repeating-linear-gradient(90deg,#cfcfcf 0 3px,transparent 3px 6px)"></div>
<svg class="a" style="left:5px;top:115px" width="16" height="16"><use href="#drive"/></svg>
<svg class="a" style="left:15.5px;top:126px" width="7" height="7"><use href="#chk"/></svg>
<div class="t" style="left:24.3px;top:118.00px;font-size:11.6px;color:#1c1c70">Work-Zippy (E:)</div>
<div class="a" style="left:0;top:132px;width:352px;height:1px;background:repeating-linear-gradient(90deg,#cfcfcf 0 3px,transparent 3px 6px)"></div>
<svg class="a" style="left:5px;top:134px" width="16" height="16"><use href="#driver"/></svg>
<svg class="a" style="left:15.5px;top:145px" width="7" height="7"><use href="#chk"/></svg>
<div class="t" style="left:24.3px;top:137.00px;font-size:11.6px;color:#1c1c70">Work+ (F:)</div>
<div class="a" style="left:0;top:151px;width:352px;height:1px;background:repeating-linear-gradient(90deg,#cfcfcf 0 3px,transparent 3px 6px)"></div>
<svg class="a" style="left:5px;top:153px" width="16" height="16"><use href="#drive"/></svg>
<svg class="a" style="left:15.5px;top:164px" width="7" height="7"><use href="#chk"/></svg>
<div class="t" style="left:24.3px;top:156.00px;font-size:11.6px;color:#1c1c70">Games-Zippy (G:)</div>
<div class="a" style="left:0;top:170px;width:352px;height:1px;background:repeating-linear-gradient(90deg,#cfcfcf 0 3px,transparent 3px 6px)"></div>
<svg class="a" style="left:5px;top:172px" width="16" height="16"><use href="#driver"/></svg>
<svg class="a" style="left:15.5px;top:183px" width="7" height="7"><use href="#chk"/></svg>
<div class="t" style="left:24.3px;top:175.00px;font-size:11.6px;color:#1c1c70">Games-Snail (H:)</div>
<div class="a" style="left:0;top:189px;width:352px;height:1px;background:repeating-linear-gradient(90deg,#cfcfcf 0 3px,transparent 3px 6px)"></div>
<svg class="a" style="left:5px;top:191px" width="16" height="16"><use href="#driver"/></svg>
<svg class="a" style="left:15.5px;top:202px" width="7" height="7"><use href="#chk"/></svg>
<div class="t" style="left:24.3px;top:194.00px;font-size:11.6px;color:#1c1c70">Entertainment (I:)</div>
<div class="a" style="left:0;top:208px;width:352px;height:1px;background:repeating-linear-gradient(90deg,#cfcfcf 0 3px,transparent 3px 6px)"></div>
<svg class="a" style="left:5px;top:210px" width="16" height="16"><use href="#driver"/></svg>
<svg class="a" style="left:15.5px;top:221px" width="7" height="7"><use href="#chk"/></svg>
<div class="t" style="left:24.3px;top:213.00px;font-size:11.6px;color:#1c1c70">X0 (J:)</div>
<div class="a" style="left:0;top:227px;width:352px;height:1px;background:repeating-linear-gradient(90deg,#cfcfcf 0 3px,transparent 3px 6px)"></div>
<svg class="a" style="left:5px;top:229px" width="16" height="16"><use href="#driver"/></svg>
<svg class="a" style="left:15.5px;top:240px" width="7" height="7"><use href="#chk"/></svg>
<div class="t" style="left:24.3px;top:232.00px;font-size:11.6px;color:#1c1c70">External-Seagate-EMPTY (M:)</div>
<div class="a" style="left:0;top:246px;width:352px;height:1px;background:repeating-linear-gradient(90deg,#cfcfcf 0 3px,transparent 3px 6px)"></div>
<svg class="a" style="left:5px;top:248px" width="16" height="16"><use href="#driver"/></svg>
<svg class="a" style="left:15.5px;top:259px" width="7" height="7"><use href="#chk"/></svg>
<div class="t" style="left:24.3px;top:251.00px;font-size:11.6px;color:#1c1c70">MyBook_Backups (N:)</div>
<div class="a" style="left:0;top:265px;width:352px;height:1px;background:repeating-linear-gradient(90deg,#cfcfcf 0 3px,transparent 3px 6px)"></div>
<svg class="a" style="left:5px;top:267px" width="16" height="16"><use href="#drive"/></svg>
</div>
<div class="a" style="left:518px;top:473px;width:116px;height:2px;background:#8a8a8a;"></div>
<div class="a" style="left:53px;top:482px;width:816px;height:2px;background:#fff;"></div>
<div class="a" style="left:53px;top:484px;width:816px;height:21px;background:#f3f3f3;border-radius:0 0 6px 6px"></div>
<div class="t" style="left:58px;top:492.10px;font-size:11.4px;color:#111;">18 drives&nbsp;&nbsp;573 GB / 26.3 TB free local storage</div>
<svg class="a" style="left:859px;top:495px;" width="9" height="9" viewBox="0 0 9 9"><g fill="#a0a0a0"><rect x="6" y="0" width="1.5" height="1.5"/><rect x="3" y="3" width="1.5" height="1.5"/><rect x="6" y="3" width="1.5" height="1.5"/><rect x="0" y="6" width="1.5" height="1.5"/><rect x="3" y="6" width="1.5" height="1.5"/><rect x="6" y="6" width="1.5" height="1.5"/></g></svg>
<div class="a" style="left:583.5px;top:-10px;width:262.5px;height:263px;background:#f9f9f9;border:1px solid #dadada;border-radius:0 0 7px 7px;box-shadow:1px 2px 4px rgba(0,0,0,.12)"></div>
<div class="a" style="left:592px;top:3px;width:245px;height:1px;background:#dadada;"></div>
<div class="a" style="left:592px;top:34px;width:245px;height:1px;background:#dadada;"></div>
<div class="a" style="left:592px;top:87px;width:245px;height:1px;background:#dadada;"></div>
<div class="a" style="left:592px;top:140px;width:245px;height:1px;background:#dadada;"></div>
<div class="a" style="left:592px;top:171px;width:245px;height:1px;background:#dadada;"></div>
<div class="a" style="left:592px;top:224px;width:245px;height:1px;background:#dadada;"></div>
<div class="a" style="left:589px;top:229.5px;width:250px;height:21.5px;background:#f0f0f0;border-radius:4px"></div>
<div class="t" style="left:621px;top:13.00px;font-size:12px;color:#1a1a1a;">KDiff3</div>
<div class="t" style="left:621px;top:43.50px;font-size:12px;color:#1a1a1a;">Include in library</div>
<div class="t" style="left:621px;top:65.50px;font-size:12px;color:#1a1a1a;">Pin to Start</div>
<div class="t" style="left:621px;top:97.00px;font-size:12px;color:#1a1a1a;">Format...</div>
<div class="t" style="left:621px;top:119.00px;font-size:12px;color:#1a1a1a;">PowerISO</div>
<div class="t" style="left:621px;top:150.00px;font-size:12px;color:#1a1a1a;">Copy</div>
<div class="t" style="left:621px;top:181.00px;font-size:12px;color:#1a1a1a;">Create shortcut</div>
<div class="t" style="left:621px;top:203.00px;font-size:12px;color:#1a1a1a;">Rename</div>
<div class="t" style="left:621px;top:234.00px;font-size:12px;color:#1a1a1a;">Properties</div>
<svg class="a" style="left:824px;top:14px;" width="7" height="10" viewBox="0 0 7 10"><path d="M1.5 1L5.5 5L1.5 9" stroke="#333" stroke-width="1.2" fill="none"/></svg>
<svg class="a" style="left:824px;top:44.5px;" width="7" height="10" viewBox="0 0 7 10"><path d="M1.5 1L5.5 5L1.5 9" stroke="#333" stroke-width="1.2" fill="none"/></svg>
<svg class="a" style="left:824px;top:120px;" width="7" height="10" viewBox="0 0 7 10"><path d="M1.5 1L5.5 5L1.5 9" stroke="#333" stroke-width="1.2" fill="none"/></svg>
<svg class="a" style="left:592px;top:117px;" width="16" height="16" viewBox="0 0 16 16"><defs><radialGradient id="cd" cx=".45" cy=".45" r=".55"><stop offset="0" stop-color="#ffffff"/><stop offset=".25" stop-color="#f4ecc0"/><stop offset=".7" stop-color="#e4d490"/><stop offset="1" stop-color="#f0e6b8"/></radialGradient></defs><circle cx="7.8" cy="7.7" r="6.8" fill="url(#cd)" stroke="#c8c0a0" stroke-width=".5"/><path d="M13.5 5A6.8 6.8 0 0 1 11 13.5" stroke="#707070" stroke-width=".9" fill="none" stroke-dasharray="2 1"/><circle cx="7.8" cy="7.7" r="1.6" fill="#fff" stroke="#a09060" stroke-width=".5"/></svg>
<div class="a" style="left:560.5px;top:213.5px;width:305px;height:55px;border:5.5px solid #e21a1a;box-shadow:0 0 2px rgba(120,0,0,.4)"></div>
<svg class="a" style="left:676px;top:243px;" width="14" height="20" viewBox="0 0 14 20"><path d="M1 1V16L4.6 12.6L7.2 18.5L9.6 17.4L7 11.7H12Z" fill="#fff" stroke="#000" stroke-width="1"/></svg>
</body></html>
